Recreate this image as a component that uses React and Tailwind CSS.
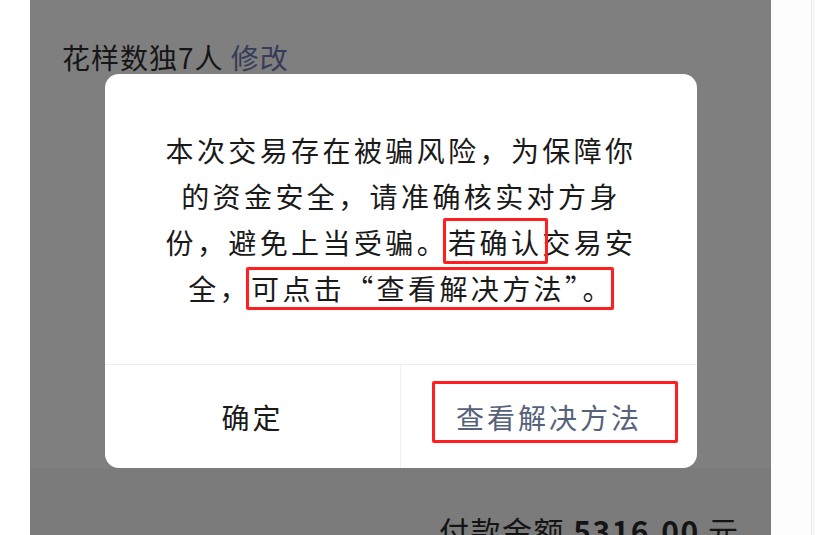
import React from 'react';

const lines = [
  '本次交易存在被骗风险，为保障你',
  '的资金安全，请准确核实对方身',
  '份，避免上当受骗。若确认交易安',
  '全，可点击“查看解决方法”。',
];

export default function App() {
  return (
    <div className="flex h-[535px] w-[815px] overflow-hidden bg-white font-['Noto_Sans_CJK_SC',sans-serif]">
      <div className="w-[30px] shrink-0 bg-white" />

      <div className="flex w-[741px] shrink-0 flex-col bg-[#7f7f7f]">
        <div className="shrink-0 pl-[32px] pt-[40px] text-[28px] leading-[34px] tracking-[1px] text-[#161616]">
          花样数独7人 <span className="text-[#363c58]">修改</span>
        </div>

        <div className="relative ml-[75px] flex h-[394px] w-[592px] shrink-0 flex-col rounded-[14px] bg-white">
          <div className="h-[291px] border-b border-[#ececec] pt-[53px] text-center text-[28px] leading-[46px] tracking-[3.4px] text-[#1a1a1a]">
            {lines.map((l) => (
              <div key={l}>{l}</div>
            ))}
          </div>
          <div className="grid flex-1 grid-cols-2 text-[28px] tracking-[3px]">
            <div className="flex items-center justify-center border-r border-[#f0f0f0] text-[#1a1a1a]">确定</div>
            <div className="flex items-center justify-center text-[#56617a]">查看解决方法</div>
          </div>

          {/* red annotation boxes */}
          <div className="absolute left-[338px] top-[144px] h-[46px] w-[105px] rounded-[2px] border-[3px] border-[#ff1f1f]" />
          <div className="absolute left-[141px] top-[193px] h-[43px] w-[368px] rounded-[2px] border-[3px] border-[#ff1f1f]" />
          <div className="absolute left-[327px] top-[307px] h-[62px] w-[246px] rounded-[2px] border-[3px] border-[#ff1f1f]" />
        </div>

        <div className="flex-1 bg-[#7b7b7b] pl-[409px] pt-[42px] text-[30px] leading-[40px] tracking-[1.5px] text-[#141414]">
          付款金额 <span className="font-bold">5316.00</span> 元
        </div>
      </div>

      <div className="w-[40px] shrink-0 bg-[#fdfdfd]" />
      <div className="flex-1 border-l border-[#ececec] bg-[#f6f6f6]" />
    </div>
  );
}
